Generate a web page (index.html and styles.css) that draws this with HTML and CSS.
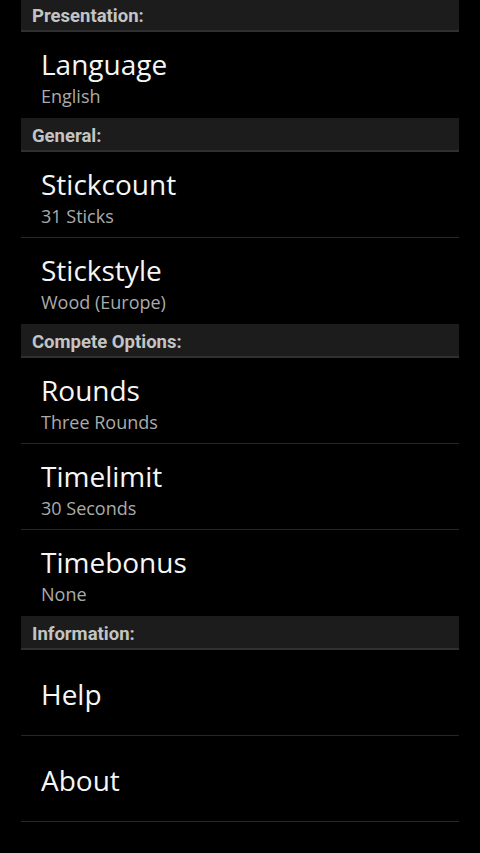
FILE: index.html
```html
<!DOCTYPE html>
<html lang="en">
<head>
<meta charset="UTF-8" />
<meta name="viewport" content="width=device-width, initial-scale=1" />
<title>Settings</title>
<link rel="stylesheet" href="styles.css">
</head>
<body>

<div class="prefs">
  <div class="group-title">Presentation:</div>
  <div class="pref">
    <div class="pref-title">Language</div>
    <div class="pref-summary">English</div>
  </div>

  <div class="group-title">General:</div>
  <div class="pref">
    <div class="pref-title">Stickcount</div>
    <div class="pref-summary">31 Sticks</div>
  </div>
  <div class="pref">
    <div class="pref-title">Stickstyle</div>
    <div class="pref-summary">Wood (Europe)</div>
  </div>

  <div class="group-title">Compete Options:</div>
  <div class="pref">
    <div class="pref-title">Rounds</div>
    <div class="pref-summary">Three Rounds</div>
  </div>
  <div class="pref">
    <div class="pref-title">Timelimit</div>
    <div class="pref-summary">30 Seconds</div>
  </div>
  <div class="pref">
    <div class="pref-title">Timebonus</div>
    <div class="pref-summary">None</div>
  </div>

  <div class="group-title">Information:</div>
  <div class="pref">
    <div class="pref-title">Help</div>
  </div>
  <div class="pref">
    <div class="pref-title">About</div>
  </div>
</div>

</body>
</html>
```

FILE: styles.css
```css
* {
  box-sizing: border-box;
}
body {
  margin: 0;
  background: #000;
  font-family: "Open Sans", Roboto, sans-serif;
  min-height: 853px;
}

.prefs {
  margin: -2px 21px 0;
  display: flex;
  flex-direction: column;
}

/* Category header */
.group-title {
  height: 34px;
  padding: 7px 0 0 11px;
  background: #1c1c1c;
  border-bottom: 2px solid #303030;
  color: #c4c4c4;
  font-family: Roboto, sans-serif;
  font-size: 18.5px;
  font-weight: 700;
  line-height: 23px;
}

/* Preference rows */
.pref {
  height: 86px;
  padding: 2px 0 0 20px;
  border-bottom: 1px solid #262626;
  display: flex;
  flex-direction: column;
  justify-content: center;
}
.pref:has(+ .group-title) {
  border-bottom-color: transparent;
}
.pref-title {
  color: #f6f6f6;
  font-size: 28px;
  line-height: 40px;
}
.pref-summary {
  color: #ababab;
  font-size: 18px;
  line-height: 24px;
}
```
